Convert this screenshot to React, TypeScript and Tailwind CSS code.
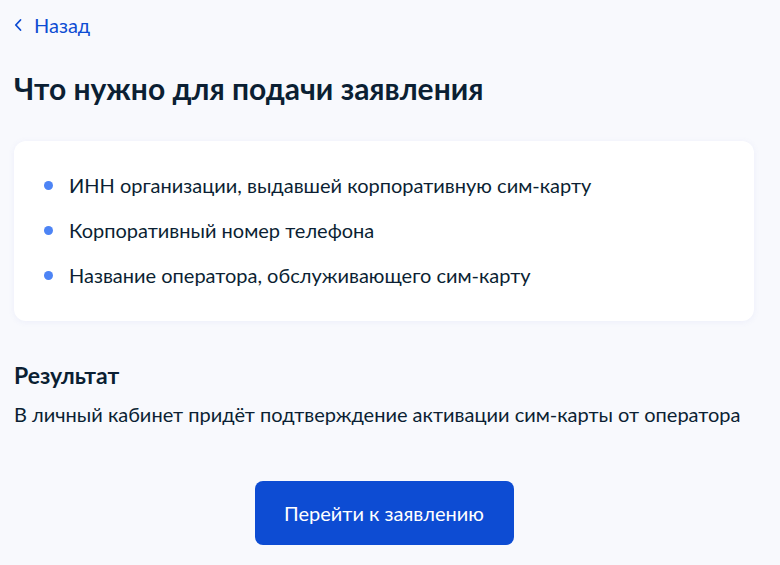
import React from 'react';

const items = [
  'ИНН организации, выдавшей корпоративную сим-карту',
  'Корпоративный номер телефона',
  'Название оператора, обслуживающего сим-карту',
];

export default function App() {
  return (
    <div
      className="min-h-[565px] w-[780px] bg-[#f8f9fd] text-[#0b1f33] pl-[14px]"
      style={{ fontFamily: 'Lato, "Open Sans", sans-serif' }}
    >
      <div className="w-[740px] pt-[13px]">
        <a href="#" className="flex items-center gap-[11px] text-[20px] leading-[24px] text-[#0d4cd3] w-fit">
          <svg width="9" height="14" viewBox="0 0 9 14">
            <path d="M6.5 2 L1.8 7 L6.5 12" fill="none" stroke="#0d4cd3" strokeWidth="1.8" strokeLinecap="round" strokeLinejoin="round" />
          </svg>
          Назад
        </a>

        <h1 className="mt-[35px] text-[30px] leading-[32px] font-bold">Что нужно для подачи заявления</h1>

        <div className="mt-[37px] bg-white rounded-[12px] px-[30px] pt-[31px] pb-[33px] shadow-[0_1px_6px_rgba(100,120,220,0.08)]">
          <ul className="flex flex-col gap-[19px]">
            {items.map((t) => (
              <li key={t} className="flex items-center text-[20px] leading-[26px]">
                <span className="w-[9px] h-[9px] rounded-full bg-[#4d84f5] mr-[16px] shrink-0" />
                {t}
              </li>
            ))}
          </ul>
        </div>

        <h2 className="mt-[40px] text-[23px] leading-[28px] font-bold">Результат</h2>
        <p className="mt-[13px] text-[20px] leading-[24px]">
          В личный кабинет придёт подтверждение активации сим-карты от оператора
        </p>

        <div className="mt-[55px] flex justify-center">
          <button className="w-[259px] h-[64px] rounded-[8px] bg-[#0d4cd3] text-white text-[20px]">
            Перейти к заявлению
          </button>
        </div>
      </div>
    </div>
  );
}
